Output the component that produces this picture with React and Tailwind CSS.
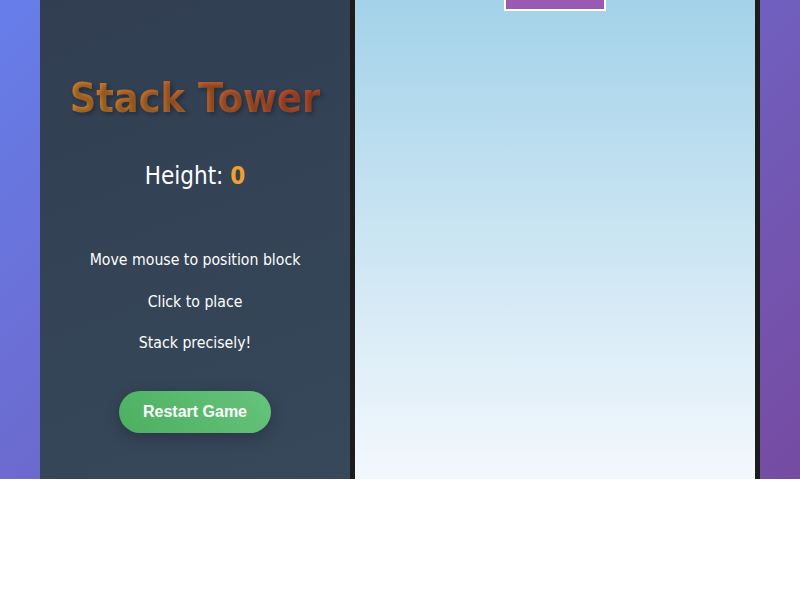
export default function App() {
  return (
    <div className="w-[800px] h-[479px] overflow-hidden flex px-[40px] bg-[linear-gradient(135deg,#667eea_0%,#764ba2_100%)] font-['DejaVu_Sans_Condensed','DejaVu_Sans',sans-serif]">
      <div className="w-[310px] h-full flex flex-col items-center pt-[74px] text-white bg-[linear-gradient(160deg,#313e51_0%,#37485b_100%)]">
        <h1 className="text-[41px] leading-[48px] font-bold bg-[linear-gradient(45deg,#d08a2c,#b5452f)] bg-clip-text text-transparent [text-shadow:2px_2px_4px_rgba(0,0,0,0.3)]">
          Stack Tower
        </h1>
        <div className="mt-[39px] text-[24px] leading-[30px]">
          Height: <span className="font-bold text-[#f0a030]">0</span>
        </div>
        <div className="mt-[59px] flex flex-col items-center text-[15.7px] leading-[20px]">
          <p>Move mouse to position block</p>
          <p className="mt-[22px]">Click to place</p>
          <p className="mt-[21px]">Stack precisely!</p>
        </div>
        <button className="mt-[38px] px-[24px] py-[12px] rounded-full text-white font-bold text-[16px] leading-[18px] font-['Liberation_Sans',Arial,sans-serif] bg-[linear-gradient(45deg,#4caf5f,#66c47c)] shadow-[0_4px_15px_rgba(0,0,0,0.25)]">
          Restart Game
        </button>
      </div>
      <div className="w-[410px] h-full border-x-[5px] border-[#1c1c1c] relative bg-[linear-gradient(180deg,#a3d2e9_0%,#f3f8fd_100%)]">
        <div className="absolute left-[149px] top-[-2px] w-[102px] h-[13px] border-2 border-white bg-[#9b59b6]" />
      </div>
    </div>
  );
}
